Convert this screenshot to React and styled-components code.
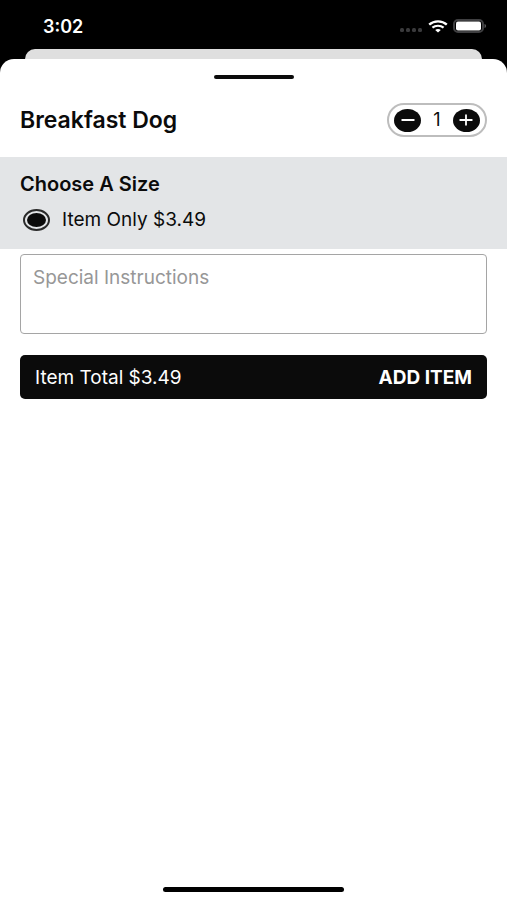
import React, { useState } from "react";
import styled, { createGlobalStyle } from "styled-components";

const PRICE = 3.49;

function StatusBar() {
  return (
    <Status>
      <Time>3:02</Time>
      <StatusIcons>
        <svg width="24" height="4" viewBox="0 0 24 4" fill="#3a3a3c">
          <rect x="1" y="0" width="4" height="4" rx="1.5" />
          <rect x="7" y="0" width="4" height="4" rx="1.5" />
          <rect x="13" y="0" width="4" height="4" rx="1.5" />
          <rect x="19" y="0" width="4" height="4" rx="1.5" />
        </svg>
        <WifiIcon width="20" height="13" viewBox="0 0 20 13" fill="none" stroke="#fff">
          <path d="M1.2 4.6C6 0.3 14 0.3 18.8 4.6" strokeWidth="2.4" />
          <path d="M4.4 7.7C7.5 5.1 12.5 5.1 15.6 7.7" strokeWidth="2.2" />
          <path d="M7.2 9.9C8.8 8.7 11.2 8.7 12.8 9.9L10 12.6Z" fill="#fff" stroke="none" />
        </WifiIcon>
        <svg width="34" height="14" viewBox="0 0 34 14">
          <rect x="1" y="1" width="29" height="12" rx="4" fill="#000" stroke="#3f3f41" strokeWidth="2" />
          <rect x="3" y="2.5" width="25" height="9" rx="2" fill="#fff" />
          <path d="M31.5 5C33.6 5.6 33.6 8.4 31.5 9Z" fill="#58585a" />
        </svg>
      </StatusIcons>
    </Status>
  );
}

function Stepper({ value, onChange }) {
  return (
    <StepperBox>
      <StepButton
        type="button"
        aria-label="Remove one"
        onClick={() => onChange(Math.max(1, value - 1))}
      >
        <svg width="14" height="12" viewBox="0 0 14 12" stroke="#fff" strokeWidth="1.8" strokeLinecap="round">
          <path d="M1.2 6H12.8" />
        </svg>
      </StepButton>
      <Quantity>{value}</Quantity>
      <StepButton type="button" aria-label="Add one" onClick={() => onChange(value + 1)}>
        <svg width="14" height="12" viewBox="0 0 14 12" stroke="#fff" strokeWidth="1.8" strokeLinecap="round">
          <path d="M1.2 6H12.8M7 1.2V10.8" />
        </svg>
      </StepButton>
    </StepperBox>
  );
}

function App() {
  const [quantity, setQuantity] = useState(1);

  return (
    <>
      <GlobalStyle />
      <Screen>
        <StatusBar />
        <BackSheet />
        <Sheet>
          <Grabber />
          <Header>
            <Title>Breakfast Dog</Title>
            <Stepper value={quantity} onChange={setQuantity} />
          </Header>
          <Options>
            <SectionTitle>Choose A Size</SectionTitle>
            <Option>
              <Radio type="radio" name="size" defaultChecked />
              Item Only ${PRICE.toFixed(2)}
            </Option>
          </Options>
          <Form>
            <Instructions
              aria-label="Special Instructions"
              placeholder="Special Instructions"
            />
            <AddButton type="button">
              <span>Item Total ${(PRICE * quantity).toFixed(2)}</span>
              <strong>ADD ITEM</strong>
            </AddButton>
          </Form>
          <HomeIndicator />
        </Sheet>
      </Screen>
    </>
  );
}

export default App;

const GlobalStyle = createGlobalStyle`
  * {
    box-sizing: border-box;
  }

  body {
    margin: 0;
    background: #000;
    color: #0b0b0b;
    font-family: Inter, "Liberation Sans", sans-serif;
    font-size: 19px;
  }

  button, input, textarea {
    font: inherit;
  }
`;

const Screen = styled.div`
  display: flex;
  flex-direction: column;
  min-height: 100vh;
`;

const Status = styled.header`
  display: flex;
  align-items: center;
  justify-content: space-between;
  height: 49px;
  padding: 3px 20px 0 43px;
  color: #fff;
`;

const Time = styled.span`
  font-size: 18px;
  font-weight: 600;
`;

const StatusIcons = styled.div`
  display: flex;
  align-items: center;
  gap: 5px;

  svg:first-child {
    margin-top: 8px;
  }
`;

const WifiIcon = styled.svg`
  display: block;
`;

const BackSheet = styled.div`
  height: 10px;
  margin: 0 25px;
  border-radius: 12px 12px 0 0;
  background: #dfdfdf;
`;

const Sheet = styled.main`
  display: flex;
  flex: 1;
  flex-direction: column;
  border-radius: 14px 14px 0 0;
  background: #fff;
`;

const Grabber = styled.div`
  width: 80px;
  height: 4px;
  margin: 16px auto 0;
  border-radius: 2px;
  background: #0b0b0b;
`;

const Header = styled.div`
  display: flex;
  align-items: center;
  justify-content: space-between;
  padding: 24px 20px 20px;
`;

const Title = styled.h1`
  margin: 0;
  font-size: 23px;
  font-weight: 600;
  line-height: 26px;
`;

const StepperBox = styled.div`
  display: flex;
  align-items: center;
  justify-content: space-between;
  width: 100px;
  height: 34px;
  padding: 0 5px;
  border: 2px solid #bdbdbd;
  border-radius: 17px;
`;

const StepButton = styled.button`
  display: flex;
  align-items: center;
  justify-content: center;
  width: 27px;
  height: 23px;
  padding: 0;
  border: 0;
  border-radius: 50%;
  background: #0b0b0b;
  cursor: pointer;
`;

const Quantity = styled.span`
  font-size: 18px;
  line-height: 24px;
`;

const Options = styled.section`
  display: flex;
  flex-direction: column;
  gap: 12px;
  padding: 15px 20px 17px;
  background: #e3e5e7;
`;

const SectionTitle = styled.h2`
  margin: 0;
  font-size: 20px;
  font-weight: 600;
  line-height: 24px;
`;

const Option = styled.label`
  display: flex;
  align-items: center;
  gap: 12px;
  padding-left: 3px;
  line-height: 24px;
`;

const Radio = styled.input`
  width: 27px;
  height: 22px;
  margin: 0;
  appearance: none;
  border: 2px solid #2a2a2a;
  border-radius: 50%;

  &:checked {
    padding: 2px;
    background: #0b0b0b content-box;
  }
`;

const Form = styled.div`
  display: flex;
  flex-direction: column;
  gap: 21px;
  padding: 5px 20px;
`;

const Instructions = styled.textarea`
  height: 80px;
  padding: 11px 12px;
  border: 1px solid #a5a5a5;
  border-radius: 4px;
  resize: none;
  line-height: 24px;

  &::placeholder {
    color: #979797;
    opacity: 1;
  }
`;

const AddButton = styled.button`
  display: flex;
  align-items: center;
  justify-content: space-between;
  height: 44px;
  padding: 0 15px;
  border: 0;
  border-radius: 5px;
  background: #0b0b0b;
  color: #fff;
  cursor: pointer;

  strong {
    font-weight: 700;
  }
`;

const HomeIndicator = styled.div`
  width: 181px;
  height: 5px;
  margin: auto auto 8px;
  border-radius: 3px;
  background: #000;
`;
